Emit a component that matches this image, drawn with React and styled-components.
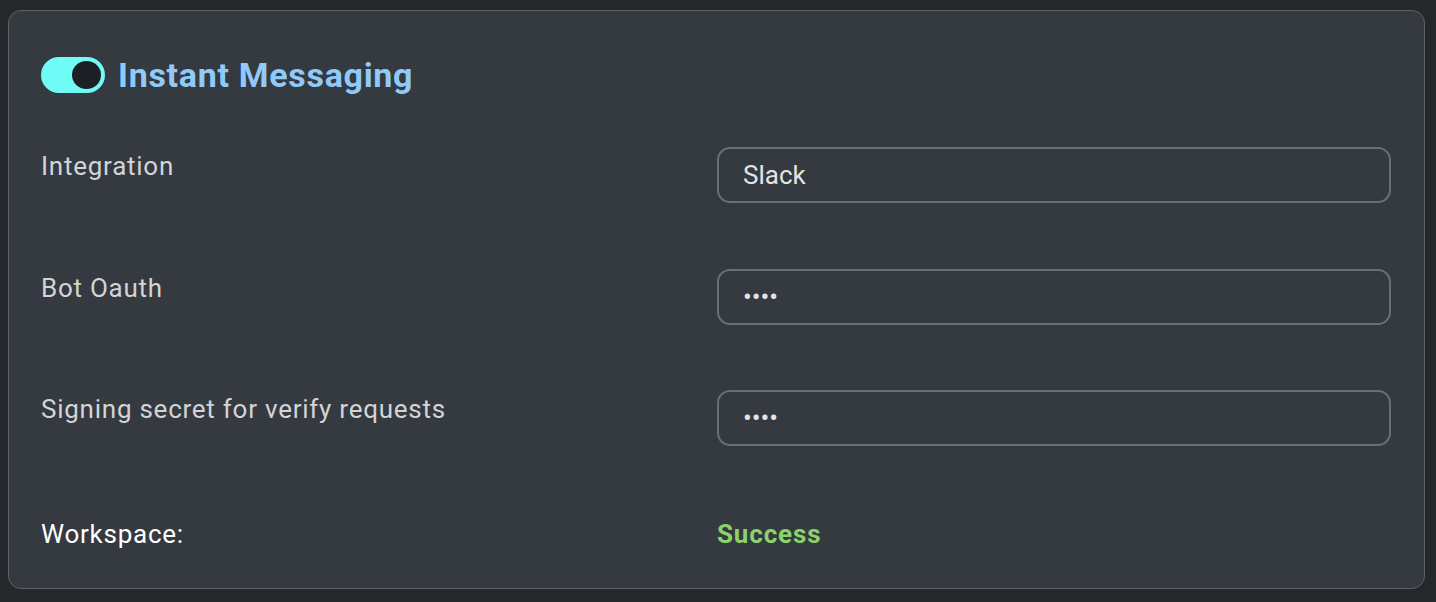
import React from "react";
import styled, { createGlobalStyle } from "styled-components";

const GlobalStyle = createGlobalStyle`
  html, body {
    margin: 0;
    background: #25272b;
  }
  body {
    font-family: Roboto, "Noto Sans", "Liberation Sans", sans-serif;
  }
`;

const Page = styled.div`
  padding: 10px 11px 14px 8px;
`;

const Card = styled.section`
  background: #353940;
  border: 1.5px solid #5e6167;
  border-radius: 13px;
  padding: 46px 33px 32px 32px;
`;

const Header = styled.div`
  display: flex;
  align-items: center;
  gap: 13px;
  height: 36px;
  margin-bottom: 54px;
`;

const Toggle = styled.button`
  position: relative;
  width: 64px;
  height: 36px;
  border: none;
  border-radius: 18px;
  background: ${(p) => (p.$on ? "#6ffbf6" : "#5e6167")};
  padding: 0;
  cursor: pointer;

  &::after {
    content: "";
    position: absolute;
    top: 4px;
    left: ${(p) => (p.$on ? "31px" : "4px")};
    width: 29px;
    height: 28px;
    border-radius: 50%;
    background: #1e1f24;
  }
`;

const Title = styled.h2`
  margin: 0;
  font-size: 34px;
  font-weight: 700;
  color: #90caf9;
  letter-spacing: 0.7px;
`;

const Form = styled.div`
  display: grid;
  grid-template-columns: 1fr 1fr;
  column-gap: 2px;
  row-gap: 65.5px;
  align-items: start;
`;

const Label = styled.div`
  font-size: 26px;
  line-height: 36px;
  letter-spacing: 0.75px;
  color: ${(p) => (p.$strong ? "#ffffff" : "#d3d4d6")};
  padding-top: 1px;
`;

const Input = styled.input`
  box-sizing: border-box;
  width: 100%;
  height: 56px;
  background: transparent;
  border: 2px solid #686e7a;
  border-radius: 13px;
  padding: 0 24px;
  font-family: inherit;
  font-size: 26px;
  color: #e4e4e6;
  outline: none;
`;

const Status = styled.div`
  font-size: 26px;
  font-weight: 700;
  line-height: 44px;
  letter-spacing: 0.85px;
  color: #8bd36b;
`;

const StatusLabel = styled(Label)`
  line-height: 44px;
  padding-top: 0;
`;

export default function App() {
  return (
    <>
      <GlobalStyle />
      <Page>
        <Card>
          <Header>
            <Toggle type="button" $on aria-label="toggle" />
            <Title>Instant Messaging</Title>
          </Header>
          <Form>
            <Label>Integration</Label>
            <Input defaultValue="Slack" />
            <Label>Bot Oauth</Label>
            <Input type="password" defaultValue="abcd" />
            <Label>Signing secret for verify requests</Label>
            <Input type="password" defaultValue="abcd" />
            <StatusLabel $strong>Workspace:</StatusLabel>
            <Status>Success</Status>
          </Form>
        </Card>
      </Page>
    </>
  );
}
